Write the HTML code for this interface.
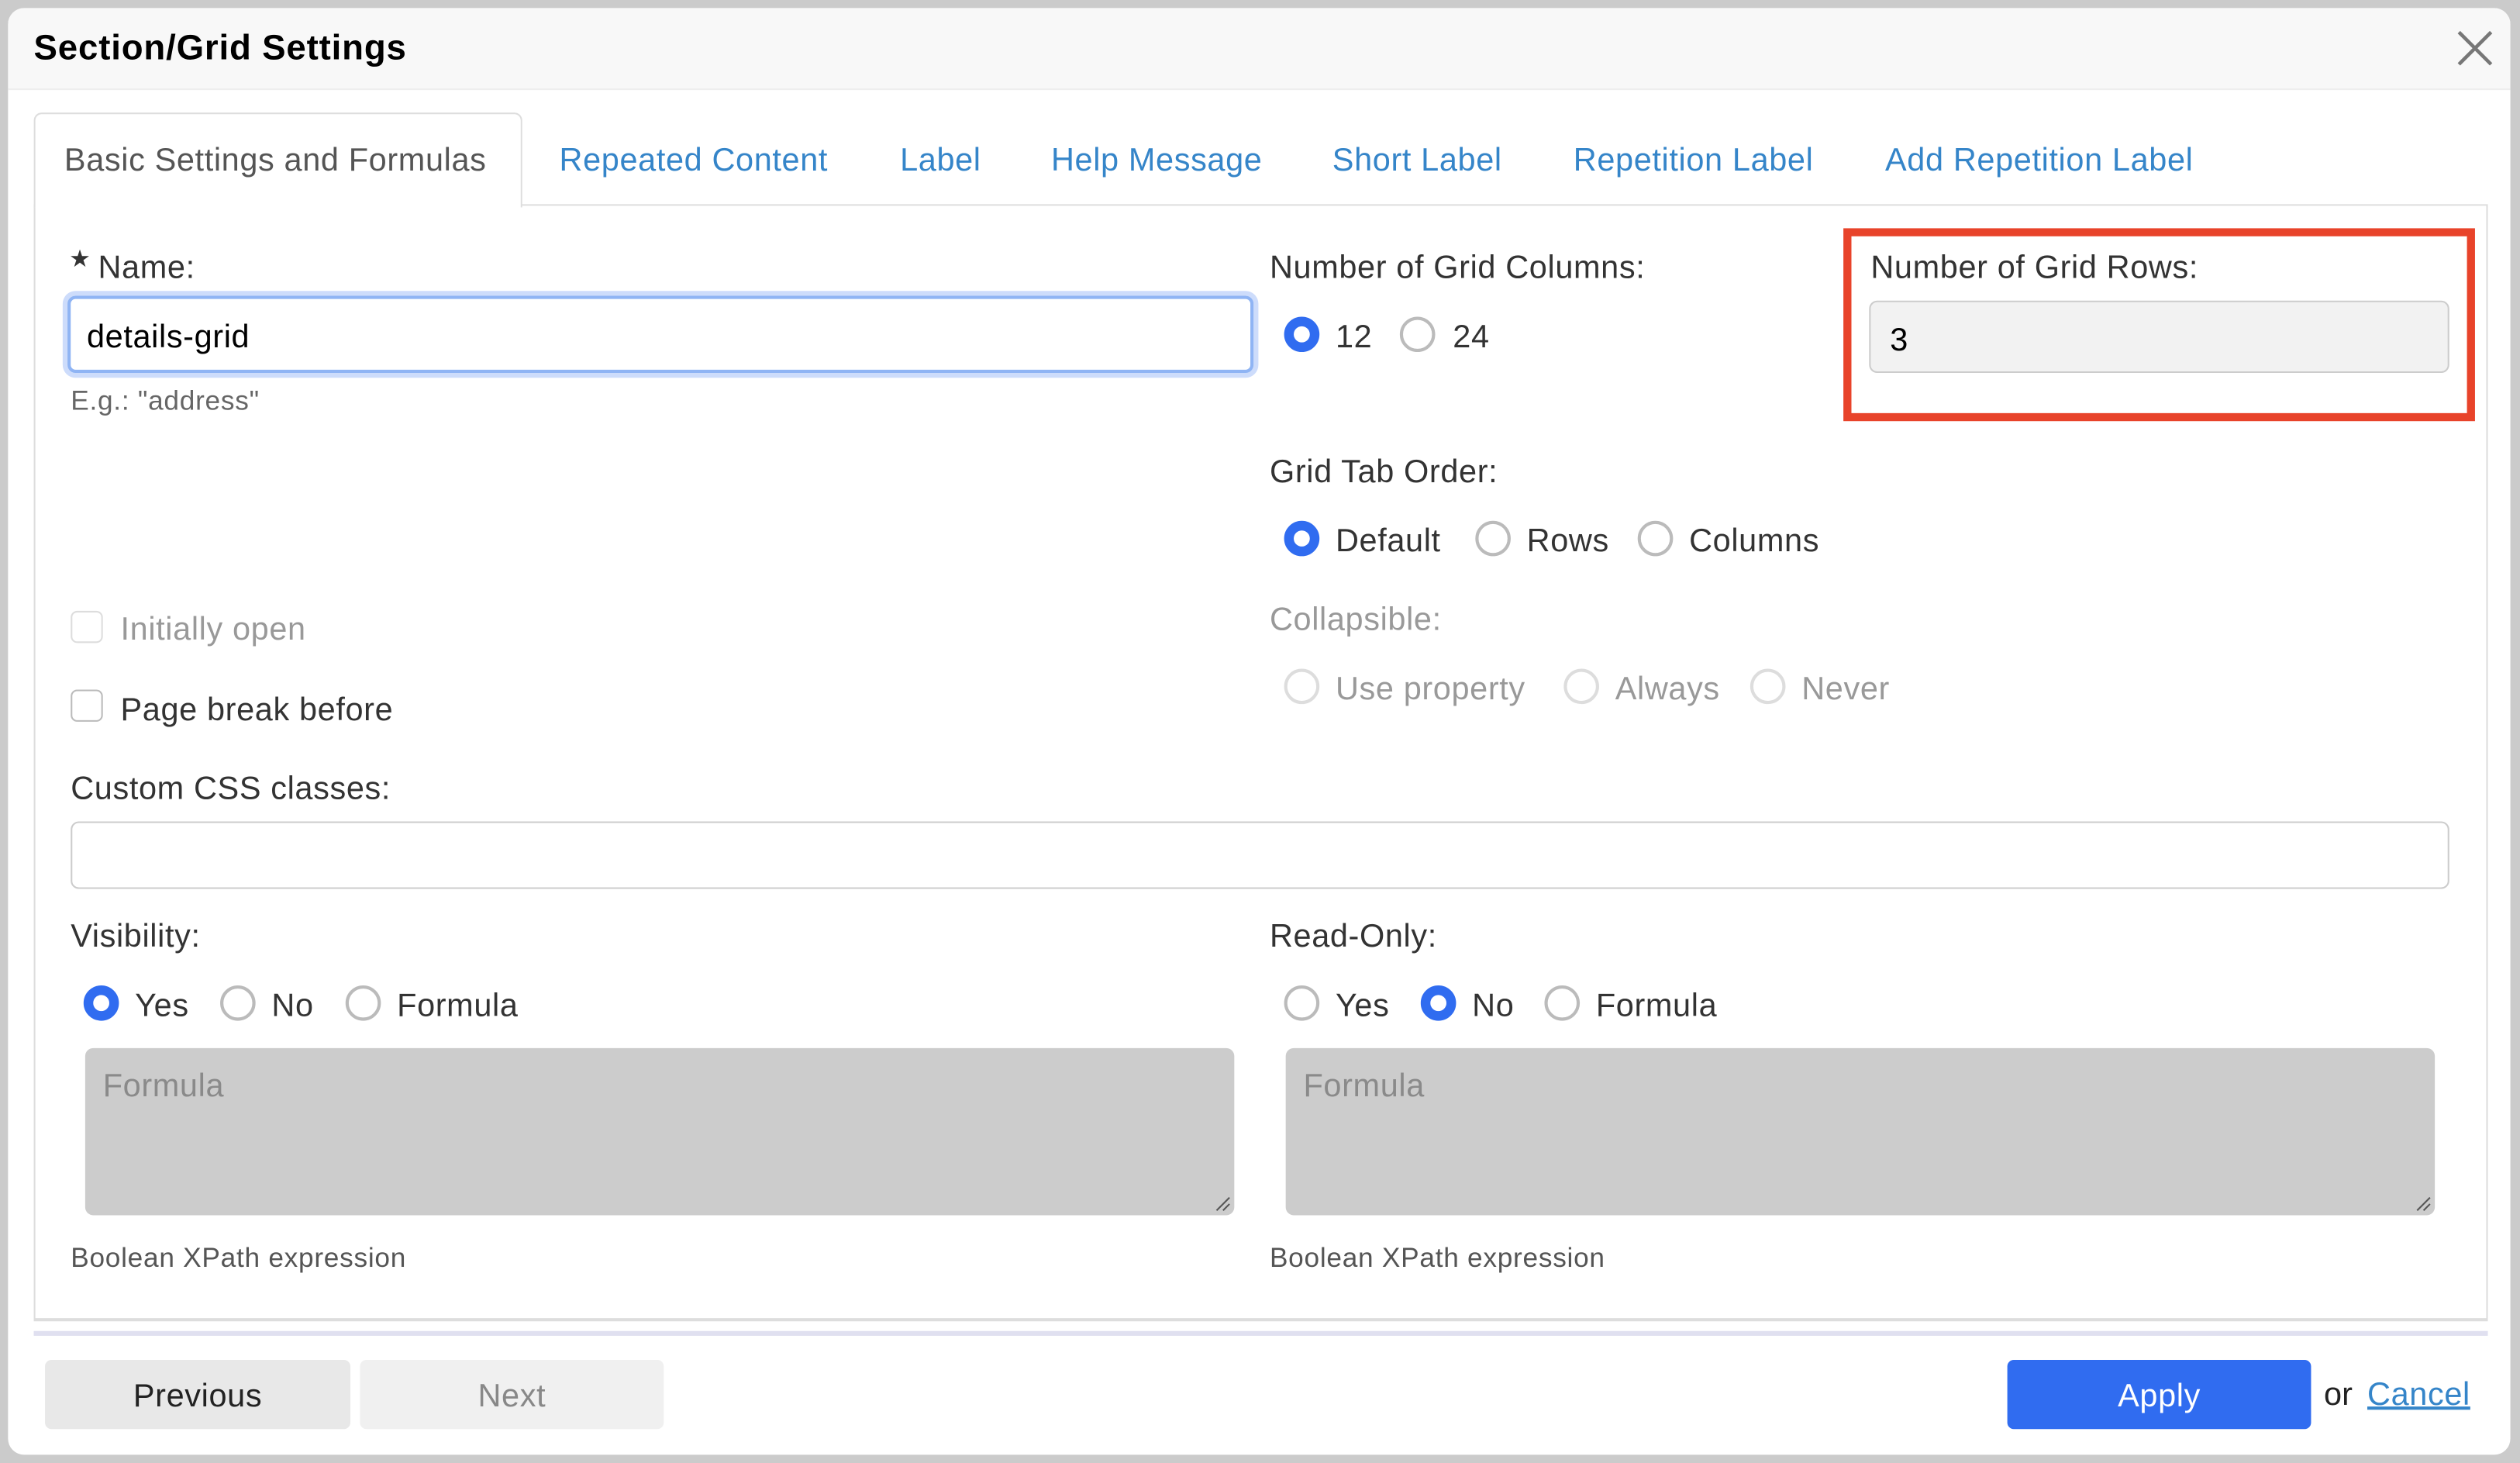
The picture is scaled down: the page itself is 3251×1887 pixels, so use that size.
<!DOCTYPE html>
<html><head><meta charset="utf-8">
<style>
html,body{margin:0;padding:0;background:#cbcbcb;width:3251px;height:1886px;overflow:hidden}
#w{position:absolute;left:0;top:0;width:1568px;height:910px;transform:scale(2.07334);transform-origin:0 0;font-family:"Liberation Sans",Arial,sans-serif;color:#333}
.a{position:absolute;white-space:nowrap}
.dlg{position:absolute;left:5px;top:5px;width:1557px;height:900px;background:#fff;border-radius:10px;overflow:hidden}
.hdr{position:absolute;left:0;top:0;width:100%;height:50px;background:#f8f8f8;border-bottom:1px solid #eee}
.t{font-size:20px;line-height:22px;letter-spacing:.3px;margin-top:1px}
.tab{font-size:20px;letter-spacing:.3px;color:#3585c9;margin-top:1px}
.radio{position:absolute;width:18px;height:18px;border:2px solid #bbb;border-radius:50%;background:#fff}
.radio.on{border:6px solid #306cf0;width:10px;height:10px;background:#fff}
.radio.dis{border-color:#ddd}
.g{color:#999}
.cb{position:absolute;width:18px;height:18px;border:1.5px solid #bbb;border-radius:4px;background:#fff}
.ta{position:absolute;background:#ccc;border-radius:5px}
.ph{position:absolute;left:11px;top:13px;font-size:20px;letter-spacing:.3px;color:#8a8a8a}
.btn{position:absolute;top:846px;height:43px;border-radius:4px;font-size:20px;letter-spacing:.3px;text-align:center;line-height:46px}
.s{font-size:17px;letter-spacing:.35px}
</style></head><body><div id="w">
<div class="dlg">
 <div class="hdr"></div>
</div>
<div class="a" style="left:21px;top:17px;font-size:22px;letter-spacing:.4px;font-weight:bold;color:#000">Section/Grid Settings</div>
<svg class="a" style="left:1528px;top:18px" width="24" height="24" viewBox="0 0 24 24"><path d="M2 2L22 22M22 2L2 22" stroke="#777" stroke-width="2.2"/></svg>

<div class="a" style="left:21px;top:127px;width:1525px;height:692px;border:1px solid #ddd;border-bottom:2px solid #ddd"></div>
<div class="a" style="left:21px;top:70px;width:302px;height:58px;border:1px solid #ddd;border-bottom:none;border-radius:5px 5px 0 0;background:#fff"></div>
<div class="a" style="left:40px;top:89px;font-size:20px;letter-spacing:.3px;color:#555">Basic Settings and Formulas</div>
<div class="a tab" style="left:348px;top:88px">Repeated Content</div>
<div class="a tab" style="left:560px;top:88px">Label</div>
<div class="a tab" style="left:654px;top:88px">Help Message</div>
<div class="a tab" style="left:829px;top:88px">Short Label</div>
<div class="a tab" style="left:979px;top:88px">Repetition Label</div>
<div class="a tab" style="left:1173px;top:88px">Add Repetition Label</div>

<div class="a" style="left:43px;top:152px;font-size:15px">&#9733;</div>
<div class="a t" style="left:61px;top:155px">Name:</div>
<div class="a" style="left:42px;top:184px;width:734px;height:44px;border:2px solid #8fb4f4;border-radius:5px;box-shadow:0 0 0 3px #cddcfb"></div>
<div class="a t" style="left:54px;top:198px;color:#000">details-grid</div>
<div class="a s" style="left:44px;top:240px;color:#666">E.g.: "address"</div>

<div class="a t" style="left:790px;top:155px">Number of Grid Columns:</div>
<div class="radio on" style="left:799px;top:197px"></div><div class="a t" style="left:831px;top:198px">12</div>
<div class="radio" style="left:871px;top:197px"></div><div class="a t" style="left:904px;top:198px">24</div>

<div class="a" style="left:1147px;top:142px;width:383px;height:110px;border:5px solid #e8432a"></div>
<div class="a t" style="left:1164px;top:155px">Number of Grid Rows:</div>
<div class="a" style="left:1163px;top:187px;width:359px;height:43px;background:#f2f2f2;border:1.5px solid #ccc;border-radius:5px"></div>
<div class="a t" style="left:1176px;top:200px;color:#000">3</div>

<div class="a t" style="left:790px;top:282px">Grid Tab Order:</div>
<div class="radio on" style="left:799px;top:324px"></div><div class="a t" style="left:831px;top:325px">Default</div>
<div class="radio" style="left:918px;top:324px"></div><div class="a t" style="left:950px;top:325px">Rows</div>
<div class="radio" style="left:1019px;top:324px"></div><div class="a t" style="left:1051px;top:325px">Columns</div>

<div class="a t g" style="left:790px;top:374px">Collapsible:</div>
<div class="radio dis" style="left:799px;top:416px"></div><div class="a t g" style="left:831px;top:417px">Use property</div>
<div class="radio dis" style="left:973px;top:416px"></div><div class="a t g" style="left:1005px;top:417px">Always</div>
<div class="radio dis" style="left:1089px;top:416px"></div><div class="a t g" style="left:1121px;top:417px">Never</div>

<div class="cb" style="left:44px;top:380px;border-color:#ddd"></div><div class="a t g" style="left:75px;top:380px">Initially open</div>
<div class="cb" style="left:44px;top:429px"></div><div class="a t" style="left:75px;top:430px">Page break before</div>

<div class="a t" style="left:44px;top:479px">Custom CSS classes:</div>
<div class="a" style="left:44px;top:511px;width:1478px;height:40px;border:1.5px solid #ccc;border-radius:5px"></div>

<div class="a t" style="left:44px;top:571px">Visibility:</div>
<div class="radio on" style="left:52px;top:613px"></div><div class="a t" style="left:84px;top:614px">Yes</div>
<div class="radio" style="left:137px;top:613px"></div><div class="a t" style="left:169px;top:614px">No</div>
<div class="radio" style="left:215px;top:613px"></div><div class="a t" style="left:247px;top:614px">Formula</div>

<div class="a t" style="left:790px;top:571px">Read-Only:</div>
<div class="radio" style="left:799px;top:613px"></div><div class="a t" style="left:831px;top:614px">Yes</div>
<div class="radio on" style="left:884px;top:613px"></div><div class="a t" style="left:916px;top:614px">No</div>
<div class="radio" style="left:961px;top:613px"></div><div class="a t" style="left:993px;top:614px">Formula</div>

<div class="ta" style="left:53px;top:652px;width:715px;height:104px"><div class="ph">Formula</div>
<svg style="position:absolute;right:2px;bottom:2px" width="10" height="10"><path d="M1 9L9 1M5 9L9 5" stroke="#555" stroke-width="1"/></svg></div>
<div class="ta" style="left:800px;top:652px;width:715px;height:104px"><div class="ph">Formula</div>
<svg style="position:absolute;right:2px;bottom:2px" width="10" height="10"><path d="M1 9L9 1M5 9L9 5" stroke="#555" stroke-width="1"/></svg></div>

<div class="a s" style="left:44px;top:773px;color:#555">Boolean XPath expression</div>
<div class="a s" style="left:790px;top:773px;color:#555">Boolean XPath expression</div>

<div class="a" style="left:21px;top:828px;width:1527px;height:3px;background:#e0e0f0"></div>

<div class="btn" style="left:28px;width:190px;background:#e8e8e8;color:#222">Previous</div>
<div class="btn" style="left:224px;width:189px;background:#f0f0f0;color:#888">Next</div>
<div class="btn" style="left:1249px;width:189px;background:#306cf0;color:#fff">Apply</div>
<div class="a" style="left:1446px;top:857px;font-size:20px;color:#222">or</div>
<div class="a" style="left:1473px;top:857px;font-size:20px;letter-spacing:.3px;color:#3585c9;text-decoration:underline">Cancel</div>
</div></body></html>
